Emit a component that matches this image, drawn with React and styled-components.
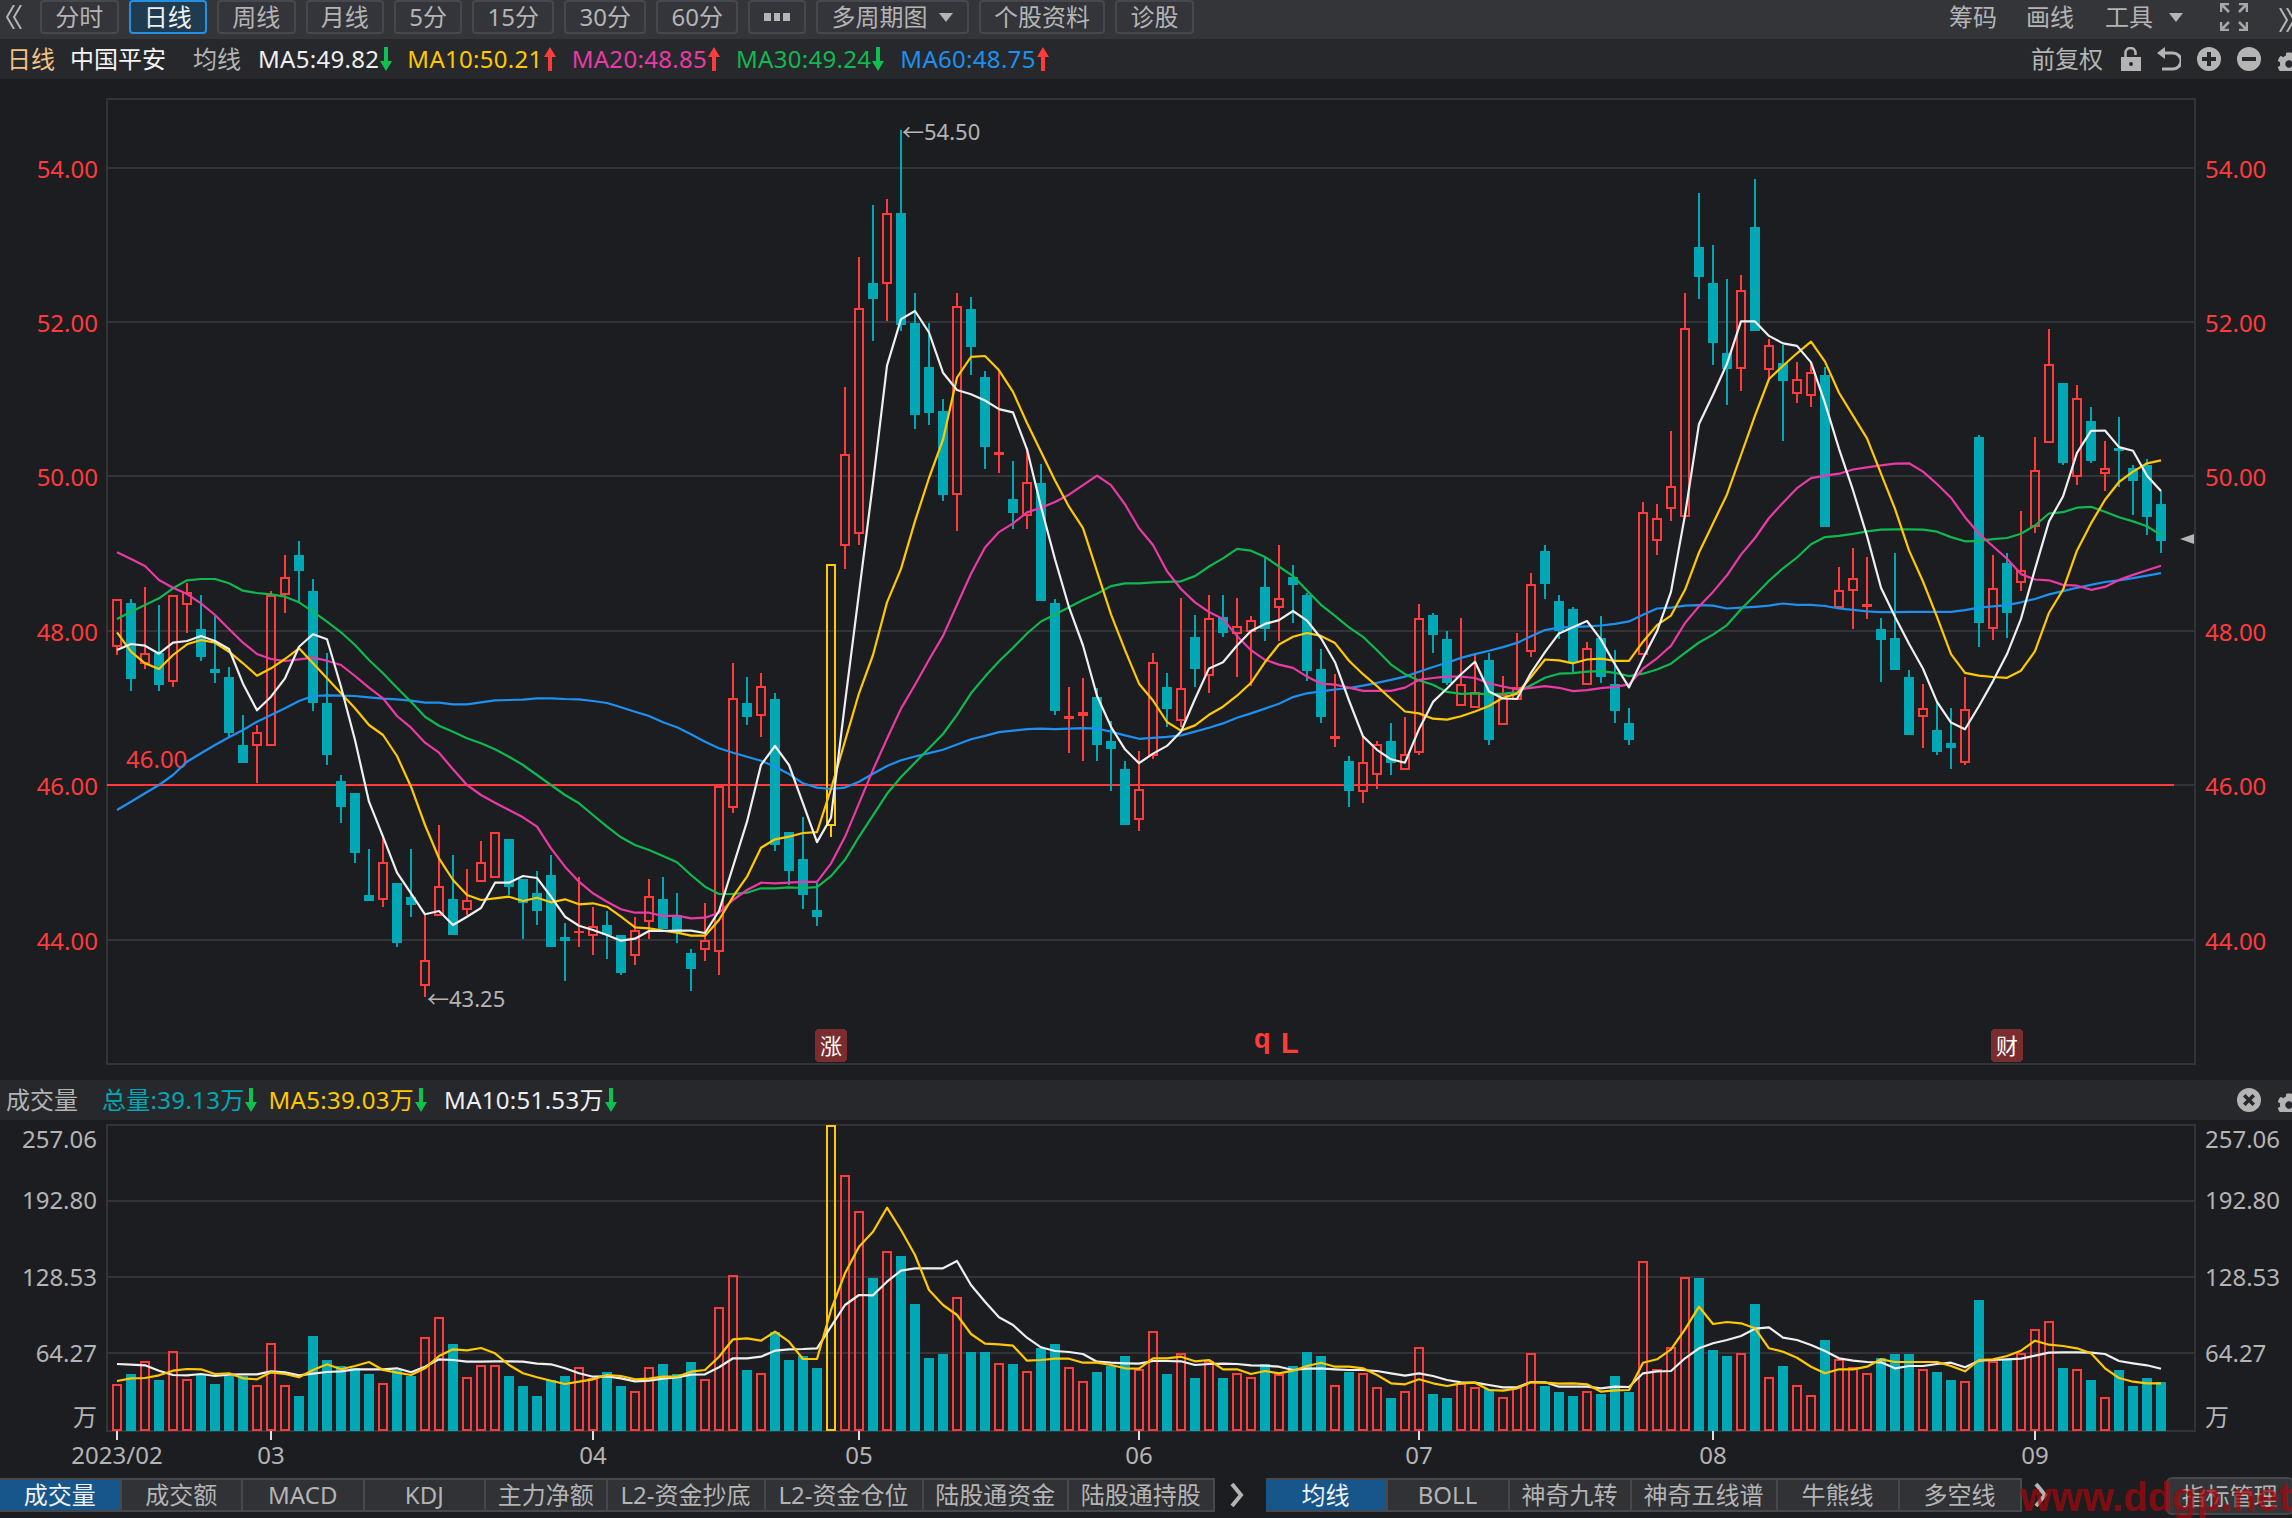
import React from 'react';
import styled, { createGlobalStyle } from 'styled-components';
import { FaCog } from 'react-icons/fa';

const GRAY = '#b4b4b4';
const RED = '#ff3b3b';
const TEAL = '#00a8b5';
const YELLOW = '#ffc800';
const PINK = '#e93aa5';
const GREEN = '#10b94f';
const BLUE = '#1e90f0';
const WHITE = '#efefef';
const GRID = '#323438';

// values were read from three crops of the chart, each with its own y scale
const fromCrop = (list, top, scale) => list.map((y) => top + y / scale);
const CROP_A = [500, 3];
const CROP_B = [100, 2.09];
const CROP_C = [150, 2.41];

const candleRows = (rows, [top, scale]) =>
  rows.map(([kind, ...ys]) => [kind, ...fromCrop(ys, top, scale).map(Math.round)]);

const CANDLES = [
  ...candleRows([
    ['r',298,298,440,465],['t',298,310,537,573],['r',262,460,493,507],['t',315,460,555,573],['r',284,286,547,560],
    ['r',250,275,314,398],['t',285,388,470,483],['t',345,507,518,548],['t',502,531,699,710],['t',645,735,789,789],
    ['r',675,695,739,850],['r',273,285,739,739],['r',165,232,284,340],['t',123,165,213,305],['t',237,273,608,633],
    ['t',460,609,765,795],['t',825,843,921,970],['t',879,879,1059,1089],['t',1047,1185,1203,1203],['r',1015,1085,1201,1221],
    ['t',1149,1149,1329,1341],['t',1047,1191,1215,1251],['r',1245,1379,1459,1491],['r',975,1157,1249,1249],['t',1065,1197,1305,1305],
    ['r',1107,1199,1231,1245],['r',1023,1085,1147,1147],['r',995,995,1135,1135],['t',1017,1017,1161,1185],['t',1137,1137,1209,1317],
    ['t',1113,1179,1233,1275],['t',1065,1125,1341,1341],['t',1269,1311,1323,1443],['r',1131,1293,1297,1341],['r',1221,1277,1309,1365],
    ['t',1233,1275,1305,1377],['t',1305,1305,1419,1425],['r',1251,1289,1369,1395],['r',1137,1187,1267,1317],['t',1131,1197,1287,1287],
    ['t',1179,1245,1299,1329],['t',1347,1359,1407,1473],['r',1209,1319,1351,1383],['r',859,859,1357,1425],['r',490,593,925,939],
    ['t',531,609,651,675],['r',519,557,649,711],['t',579,597,1035,1053],['t',995,995,1113,1155],
  ], CROP_A),
  ...candleRows([
    ['t',1498,1586,1662,1691],['t',1636,1692,1708,1727],['y',969,969,1518,1540],['r',600,739,933,980],['r',328,434,907,930],
    ['t',220,383,416,504],['r',207,237,385,462],['t',62,236,470,482],['t',403,466,659,688],['t',466,558,654,679],
    ['t',625,650,826,838],['r',403,430,825,901],['t',412,437,516,575],['t',567,579,725,771],['r',566,735,741,780],
    ['t',755,834,863,897],['r',728,798,870,897],['t',760,801,1047,1047],['t',1042,1052,1277,1285],['r',1227,1288,1294,1365],
    ['r',1207,1279,1288,1382],['t',1228,1248,1348,1382],['t',1298,1340,1357,1445],['t',1382,1399,1516,1516],['r',1361,1441,1505,1528],
    ['r',1156,1175,1372,1378],['t',1198,1227,1273,1310],['r',1040,1229,1297,1310],['t',1077,1123,1190,1227],['r',1035,1082,1204,1240],
    ['t',1035,1081,1115,1123],['r',1040,1100,1116,1205],['r',1078,1087,1111,1225],['t',958,1018,1105,1130],['r',930,1040,1062,1130],
    ['t',972,997,1013,1093],['t',1030,1035,1194,1215],['t',1148,1190,1290,1302],['r',1200,1329,1335,1353],['t',1370,1382,1445,1478],
    ['r',1330,1384,1447,1470],['r',1340,1345,1410,1440],['t',1302,1340,1385,1410],['r',1290,1367,1401,1401],['r',1053,1083,1364,1368],
    ['t',1072,1077,1119,1155],['t',1110,1127,1218,1222],['r',1082,1221,1267,1267],['r',1160,1238,1271,1271],
  ], CROP_B),
  ...candleRows([
    ['t',1213,1228,1421,1434],['r',1267,1310,1385,1385],['r',1165,1294,1325,1325],['r',1020,1047,1211,1222],['t',953,967,1045,1083],
    ['t',1073,1088,1160,1178],['t',1102,1107,1235,1257],['r',1185,1200,1290,1290],['t',1122,1175,1271,1285],['t',1205,1286,1353,1382],
    ['t',1344,1382,1421,1435],['r',848,873,1217,1217],['r',853,887,942,977],['r',678,810,865,895],['r',345,428,884,884],
    ['t',104,234,306,358],['t',229,321,466,519],['t',311,490,528,614],['r',302,337,527,581],['t',70,186,437,437],
    ['r',456,471,531,553],['t',470,514,557,702],['r',510,553,589,610],['r',510,534,594,620],['t',524,543,909,909],
    ['r',1006,1060,1104,1104],['r',958,1031,1062,1155],['r',982,1094,1101,1130],['t',1128,1155,1180,1281],['t',972,1175,1252,1252],
    ['t',1252,1271,1411,1411],['r',1286,1345,1367,1440],['t',1332,1397,1450,1458],['t',1344,1430,1440,1492],['r',1271,1346,1477,1483],
    ['t',688,692,1140,1198],['r',977,1056,1154,1180],['t',972,996,1117,1175],['r',871,1013,1044,1063],['r',692,771,908,923],
    ['r',432,516,705,705],['t',562,562,755,760],['r',567,598,787,808],['t',620,654,750,755],['r',702,767,782,823],
    ['t',644,717,725,812],['t',760,767,797,880],['t',745,760,885,929],['t',823,852,942,972],
  ], CROP_C),
];

const maLine = (a, b, c) => [...fromCrop(a, ...CROP_A), ...fromCrop(b, ...CROP_B), ...fromCrop(c, ...CROP_C)];

const MA_LINES = [
  {
    color: BLUE,
    ys: maLine(
      [930,905,880,855,825,785,760,735,712,690,665,645,625,603,588,586,587,588,592,596,598,602,608,608,613,613,607,601,600,599,595,595,597,598,603,609,622,635,648,667,682,703,725,745,758,770,782,800,822],
      [1428,1437,1440,1437,1425,1408,1392,1380,1372,1365,1358,1347,1336,1329,1321,1318,1315,1314,1315,1314,1313,1314,1320,1328,1335,1333,1331,1328,1320,1312,1303,1291,1282,1272,1262,1248,1240,1236,1232,1229,1224,1218,1212,1205,1195,1185,1176,1166,1158],
      [1207,1198,1188,1172,1157,1151,1150,1148,1146,1142,1136,1120,1105,1103,1098,1097,1098,1105,1103,1101,1098,1093,1096,1096,1099,1105,1108,1112,1114,1114,1113,1113,1113,1113,1109,1103,1100,1097,1090,1082,1071,1063,1055,1048,1041,1037,1032,1026,1020],
    ),
  },
  {
    color: GREEN,
    ys: maLine(
      [357,335,315,295,265,241,237,237,250,272,279,283,290,307,335,365,397,435,480,520,563,605,650,677,695,715,730,748,770,795,825,855,885,910,945,980,1012,1035,1050,1068,1087,1125,1160,1182,1182,1178,1165,1165,1162],
      [1647,1645,1622,1588,1540,1495,1450,1415,1385,1355,1325,1285,1240,1205,1173,1145,1115,1090,1075,1060,1045,1032,1016,1010,1010,1008,1007,1006,995,975,958,938,942,955,975,995,1025,1055,1078,1102,1122,1150,1180,1200,1213,1222,1237,1241,1240],
      [1312,1310,1307,1290,1272,1262,1261,1257,1256,1260,1268,1262,1252,1238,1212,1187,1168,1145,1107,1073,1038,1008,982,950,933,930,925,919,915,914,914,915,920,933,943,942,938,935,925,905,876,873,862,860,872,885,895,907,928],
    ),
  },
  {
    color: PINK,
    ys: maLine(
      [157,177,198,240,263,282,310,345,387,428,462,477,483,478,473,482,495,528,563,595,648,683,728,758,808,855,885,908,930,952,980,1045,1100,1145,1180,1205,1228,1238,1238,1248,1247,1255,1253,1238,1200,1170,1148,1150,1148],
      [1634,1634,1596,1540,1470,1400,1335,1272,1222,1170,1120,1055,990,935,903,885,862,852,840,825,805,785,805,845,895,930,985,1022,1050,1070,1085,1120,1150,1170,1180,1187,1205,1220,1222,1228,1235,1235,1235,1228,1212,1208,1205,1205,1208],
      [1285,1293,1300,1296,1292,1296,1304,1302,1297,1294,1288,1250,1225,1195,1140,1100,1065,1025,975,935,887,850,815,791,785,780,770,765,760,756,755,775,805,838,885,925,955,985,1022,1035,1037,1048,1050,1060,1053,1036,1024,1013,1002],
    ),
  },
  {
    color: YELLOW,
    ys: maLine(
      [397,455,490,507,465,433,420,428,455,490,527,505,477,445,490,535,580,625,675,705,768,860,975,1075,1140,1185,1200,1195,1190,1203,1193,1207,1198,1213,1210,1220,1250,1282,1285,1292,1298,1307,1307,1260,1190,1130,1043,1018,1010],
      [1532,1530,1440,1340,1240,1160,1050,980,880,790,710,580,537,535,565,610,675,735,795,850,895,985,1075,1150,1220,1255,1300,1318,1307,1285,1268,1245,1218,1175,1138,1122,1114,1120,1135,1172,1200,1225,1252,1278,1282,1293,1295,1288,1278],
      [1340,1320,1310,1270,1228,1230,1237,1228,1226,1231,1231,1185,1145,1122,1060,970,900,830,735,640,552,520,490,462,510,585,640,695,780,865,965,1040,1125,1215,1260,1267,1270,1272,1255,1208,1115,1060,965,900,843,800,775,755,748],
    ),
  },
  {
    color: WHITE,
    ys: maLine(
      [450,432,437,461,428,423,408,423,447,551,631,590,535,440,403,418,560,720,905,1010,1118,1180,1243,1233,1275,1250,1224,1148,1148,1128,1134,1190,1250,1277,1290,1305,1322,1316,1293,1293,1292,1292,1299,1233,1100,965,795,738,795],
      [1470,1551,1500,1260,1030,800,555,458,441,486,570,606,615,628,646,653,730,850,960,1060,1140,1245,1310,1357,1386,1366,1350,1320,1252,1188,1175,1140,1110,1095,1087,1068,1088,1125,1175,1255,1330,1358,1378,1385,1315,1258,1230,1200,1174],
      [1305,1322,1323,1260,1210,1165,1150,1135,1180,1240,1295,1225,1160,1065,880,660,590,515,413,413,448,466,472,512,610,720,820,930,1055,1125,1190,1250,1330,1380,1396,1340,1280,1215,1130,1010,895,835,730,677,676,716,725,785,822],
    ),
  },
];

const volY = (list) => fromCrop(list, 1040, 3);

const VOLUME_TOPS = volY([
  1033,1002,962,1020,932,1016,1006,1032,1008,1008,1034,908,1034,1068,888,960,978,984,1002,1028,990,1008,890,830,912,1010,974,974,1008,1038,1068,1020,1008,980,1015,996,1038,1052,980,972,1002,966,1016,800,704,990,998,876,960,
  948,984,254,404,512,714,632,648,792,954,942,770,936,936,968,972,992,924,912,980,1022,996,978,948,986,872,1002,938,1014,962,1014,998,1010,972,1002,978,936,948,1034,996,998,1040,1074,1052,920,1062,1074,1030,1040,1048,1070,1040,938,1038,1056,1068,1052,1062,
  1008,1056,662,986,920,710,714,930,948,938,792,1010,978,1034,1064,900,956,980,998,954,942,942,986,996,1020,1022,780,962,960,938,866,842,984,986,1020,1070,990,1038,1014,1026,
]).map(Math.round);

const VOLUME_LINES = [
  {
    color: WHITE,
    ys: volY([
      972,974,976,992,1005,1006,1002,1008,1004,1003,1003,994,997,1006,1001,996,994,988,988,988,985,997,980,958,960,965,965,964,964,965,971,973,985,1000,1010,1009,1015,1024,1022,1016,1012,1004,1003,982,955,955,950,932,928,
      927,925,860,795,765,766,725,692,685,685,685,663,735,785,832,855,893,922,933,936,942,965,968,970,971,963,963,964,975,972,971,972,976,977,980,990,986,985,988,990,990,993,1000,1007,1000,1008,1020,1027,1028,1035,1042,1042,1026,1027,1040,1040,1040,1045,
      1040,1041,1000,994,993,955,925,910,900,888,866,862,893,900,915,933,955,962,966,967,985,978,978,972,968,982,962,960,958,956,947,938,937,937,938,942,963,970,976,986,
    ]),
  },
  {
    color: YELLOW,
    ys: volY([
      1023,1015,1014,1006,992,987,988,1002,1000,1015,1018,997,1002,1012,990,973,988,978,966,990,998,1005,985,948,928,931,924,940,975,1000,1012,1022,1032,1025,1018,1005,1008,1018,1016,1010,1010,995,990,950,898,895,902,875,905,
      957,957,810,700,620,575,503,570,645,750,795,825,882,911,913,917,962,960,956,956,968,968,975,985,986,955,955,950,964,960,988,988,1002,993,1000,992,978,968,980,980,985,1005,1030,1033,1018,1030,1038,1030,1028,1050,1052,1045,1027,1028,1031,1030,1033,1055,
      1051,1050,968,958,928,868,800,852,846,850,865,925,935,953,980,1000,988,988,980,958,966,966,966,966,978,994,960,958,948,932,902,914,918,925,940,985,1014,1025,1030,1030,
    ]),
  },
];

const candleX = (i) => 117 + 14 * i;
const points = (ys) => ys.map((y, i) => `${candleX(i)},${y.toFixed(1)}`).join(' ');
const kindColor = { r: RED, t: TEAL, y: YELLOW };

const priceLabels = [
  ['54.00', 168],
  ['52.00', 322],
  ['50.00', 476],
  ['48.00', 631],
  ['46.00', 785],
  ['44.00', 940],
];
const volumeLabels = [
  ['257.06', 1138],
  ['192.80', 1199],
  ['128.53', 1276],
  ['64.27', 1352],
  ['万', 1416],
];
const monthLabels = [
  ['2023/02', 117],
  ['03', 271],
  ['04', 593],
  ['05', 859],
  ['06', 1139],
  ['07', 1419],
  ['08', 1713],
  ['09', 2035],
];

const periodTabs = [
  { label: '分时' },
  { label: '日线', active: true },
  { label: '周线' },
  { label: '月线' },
  { label: '5分' },
  { label: '15分' },
  { label: '30分' },
  { label: '60分' },
];
const indicatorTabs = [
  { label: '成交量', width: 121.5, active: true },
  { label: '成交额', width: 121.5 },
  { label: 'MACD', width: 121.5 },
  { label: 'KDJ', width: 121.5 },
  { label: '主力净额', width: 121.5 },
  { label: 'L2-资金抄底', width: 158 },
  { label: 'L2-资金仓位', width: 158 },
  { label: '陆股通资金', width: 145.5 },
  { label: '陆股通持股', width: 145.5 },
];
const overlayTabs = [
  { label: '均线', width: 122, active: true },
  { label: 'BOLL', width: 122 },
  { label: '神奇九转', width: 122 },
  { label: '神奇五线谱', width: 146 },
  { label: '牛熊线', width: 122 },
  { label: '多空线', width: 122 },
];
const maReadouts = [
  { text: 'MA5:49.82', color: WHITE, up: false },
  { text: 'MA10:50.21', color: YELLOW, up: true },
  { text: 'MA20:48.85', color: PINK, up: true },
  { text: 'MA30:49.24', color: GREEN, up: false },
  { text: 'MA60:48.75', color: BLUE, up: true },
];
const volReadouts = [
  { text: '总量:39.13万', color: TEAL, gap: 11 },
  { text: 'MA5:39.03万', color: YELLOW, gap: 17 },
  { text: 'MA10:51.53万', color: WHITE, gap: 17 },
];

const GlobalStyle = createGlobalStyle`
  html, body {
    margin: 0;
    background: #1c1d21;
  }
  body {
    font-family: 'Noto Sans', 'Noto Sans CJK SC', sans-serif;
    font-size: 24px;
    color: ${GRAY};
  }
`;

const Page = styled.div`
  position: relative;
  width: 2292px;
  height: 1518px;
  overflow: hidden;
  display: flex;
  flex-direction: column;
  background: #1c1d21;
`;

const Toolbar = styled.header`
  flex: none;
  height: 39px;
  display: flex;
  align-items: flex-start;
  background: #333539;
`;

const DoubleChevron = styled.svg`
  flex: none;
  display: block;
  width: ${(p) => p.$w}px;
  height: 24px;
  margin: 5px ${(p) => p.$right || 0}px 0 ${(p) => p.$left || 0}px;
`;

const PeriodGroup = styled.nav`
  display: flex;
  gap: 10px;
`;

const PeriodButton = styled.button`
  height: 34px;
  padding: 0 13.25px;
  display: flex;
  align-items: center;
  gap: 12px;
  font: inherit;
  line-height: 30px;
  color: ${(p) => (p.$active ? '#f0f0f0' : GRAY)};
  background: ${(p) => (p.$active ? '#1e3b50' : '#33353a')};
  border: 2px solid ${(p) => (p.$active ? '#2590e2' : '#46484d')};
  border-radius: 4px;
`;

const MoreButton = styled(PeriodButton)`
  width: 58px;
  justify-content: center;
  padding: 0;
`;

const Caret = styled.i`
  flex: none;
  width: 0;
  height: 0;
  border-left: 7px solid transparent;
  border-right: 7px solid transparent;
  border-top: 9px solid ${GRAY};
`;

const ToolGroup = styled.div`
  margin-left: auto;
  height: 34px;
  display: flex;
  align-items: center;
  line-height: 30px;
`;

const ToolLabel = styled.span`
  margin-right: ${(p) => p.$gap}px;
`;

const ExpandIcon = styled.svg`
  flex: none;
  width: 28px;
  height: 28px;
  margin: 0 31px 0 37px;
`;

const InfoBar = styled.div`
  flex: none;
  height: 40px;
  display: flex;
  align-items: center;
  padding-left: ${(p) => p.$pad}px;
  line-height: 40px;
  background: #26282c;
`;

const BarText = styled.span`
  flex: none;
  white-space: nowrap;
  color: ${(p) => p.$color || GRAY};
  margin-right: ${(p) => p.$gap || 0}px;
`;

const Readout = styled.span`
  flex: none;
  display: flex;
  align-items: center;
  gap: 1px;
  margin-right: ${(p) => p.$gap}px;
  letter-spacing: 0.3px;
  white-space: nowrap;
  color: ${(p) => p.$color};
`;

const BarIcons = styled.div`
  margin-left: auto;
  display: flex;
  align-items: center;
  gap: 16px;
`;

const IconBox = styled.svg`
  flex: none;
  width: ${(p) => p.$w || 24}px;
  height: 24px;
  color: ${GRAY};
`;

const GearClip = styled.span`
  flex: none;
  width: 15px;
  height: 24px;
  overflow: hidden;
  color: ${GRAY};
  display: block;
`;

const ChartSvg = styled.svg`
  flex: none;
  display: block;
  width: 2292px;
  height: ${(p) => p.$h}px;
`;

const ChartText = styled.text`
  font-size: ${(p) => p.$size || 24}px;
  fill: ${(p) => p.$color || GRAY};
  text-anchor: ${(p) => p.$anchor || 'start'};
  dominant-baseline: central;
`;

const MarkerText = styled.text`
  font-size: 22px;
  fill: #fff;
  text-anchor: middle;
  dominant-baseline: central;
`;

const SignalText = styled.text`
  font-family: 'Liberation Sans', sans-serif;
  font-size: ${(p) => p.$size}px;
  font-weight: 700;
  fill: ${RED};
`;

const GridLine = styled.line`
  stroke: ${GRID};
  stroke-width: 2;
`;

const MaLine = styled.polyline`
  fill: none;
  stroke: ${(p) => p.$color};
  stroke-width: 2.2;
  stroke-linejoin: round;
`;

const TabBar = styled.footer`
  flex: none;
  height: 34px;
  display: flex;
`;

const TabGroup = styled.div`
  flex: none;
  display: flex;
  border-top: 2px solid #46484d;
  border-bottom: 2px solid #46484d;
`;

const Tab = styled.div`
  box-sizing: border-box;
  width: ${(p) => p.$width}px;
  text-align: center;
  line-height: 30px;
  white-space: nowrap;
  color: ${(p) => (p.$active ? '#f0f0f0' : GRAY)};
  background: ${(p) => (p.$active ? '#17568a' : '#303236')};
  border-right: 2px solid #46484d;
`;

const TabChevron = styled.svg`
  flex: none;
  width: 14px;
  height: 24px;
  align-self: center;
  margin: 0 ${(p) => p.$right}px 0 ${(p) => p.$left}px;
`;

const ManageButton = styled.div`
  flex: none;
  box-sizing: border-box;
  height: 38px;
  margin-top: -1px;
  padding: 0 14px;
  line-height: 34px;
  white-space: nowrap;
  background: #333538;
  border: 2px solid #46484d;
  border-radius: 6px;
`;

const Watermark = styled.div`
  position: absolute;
  right: 0;
  bottom: -2px;
  font-family: 'Liberation Sans', sans-serif;
  font-size: 40px;
  font-weight: 700;
  line-height: 46px;
  color: rgba(165, 8, 12, 0.74);
  pointer-events: none;
`;

const Arrow = ({ up }) => (
  <IconBox $w={12} viewBox="0 0 12 24">
    {up ? (
      <path d="M6 0 12 10H8V24H4V10H0Z" fill={RED} />
    ) : (
      <path d="M4 0H8V14H12L6 24 0 14H4Z" fill="#10c04f" />
    )}
  </IconBox>
);

const Candle = ({ data, index }) => {
  const [kind, hi, top, bot, lo] = data;
  const x = candleX(index);
  const color = kindColor[kind];
  const height = Math.max(bot - top, 2);

  if (kind === 't') {
    return (
      <g fill={color}>
        <rect x={x - 1} y={hi} width={2} height={lo - hi} />
        <rect x={x - 5} y={top} width={10} height={height} />
      </g>
    );
  }

  return (
    <g fill={color}>
      <rect x={x - 1} y={hi} width={2} height={Math.max(top - hi, 0)} />
      <rect x={x - 1} y={bot} width={2} height={Math.max(lo - bot, 0)} />
      {height < 6 ? (
        <rect x={x - 5} y={top} width={10} height={height} />
      ) : (
        <rect x={x - 4} y={top + 1} width={8} height={height - 2} fill="none" stroke={color} strokeWidth={2} />
      )}
    </g>
  );
};

const VolumeBar = ({ top, kind, index }) => {
  const x = candleX(index);
  const bottom = 1431;
  const color = kindColor[kind];
  if (kind === 't') return <rect x={x - 5} y={top} width={10} height={bottom - top} fill={color} />;
  return <rect x={x - 4} y={top + 1} width={8} height={bottom - top - 2} fill="none" stroke={color} strokeWidth={2} />;
};

const Marker = ({ x, label }) => (
  <g>
    <rect x={x - 16} y={1029} width={32} height={33} rx={4} fill="#7a2c2e" />
    <MarkerText x={x} y={1045}>{label}</MarkerText>
  </g>
);

const MainChart = () => (
  <ChartSvg $h={1001} viewBox="0 79 2292 1001" shapeRendering="crispEdges">
    <rect x={107} y={99} width={2088} height={965} fill="none" stroke={GRID} strokeWidth={2} />
    {priceLabels.map(([label, y]) => (
      <g key={label}>
        <GridLine x1={107} x2={2195} y1={y} y2={y} />
        <ChartText x={98} y={y} $color={RED} $anchor="end">{label}</ChartText>
        <ChartText x={2205} y={y} $color={RED}>{label}</ChartText>
      </g>
    ))}
    <rect x={107} y={784} width={2067} height={2} fill={RED} />
    <ChartText x={126} y={758} $color={RED}>46.00</ChartText>

    {CANDLES.map((c, i) => (
      <Candle key={i} data={c} index={i} />
    ))}
    <g shapeRendering="auto">
      {MA_LINES.map((l) => (
        <MaLine key={l.color} points={points(l.ys)} $color={l.color} />
      ))}
    </g>

    <ChartText x={902} y={131} $size={22}>←54.50</ChartText>
    <ChartText x={427} y={998} $size={22}>←43.25</ChartText>
    <path d="M2180 539 2194 534V544Z" fill={GRAY} shapeRendering="auto" />

    <Marker x={831} label="涨" />
    <Marker x={2007} label="财" />
    <SignalText x={1254} y={1048} $size={27}>q</SignalText>
    <SignalText x={1281} y={1053} $size={29}>L</SignalText>
  </ChartSvg>
);

const VolumeChart = () => (
  <ChartSvg $h={358} viewBox="0 1120 2292 358" shapeRendering="crispEdges">
    <rect x={107} y={1125} width={2088} height={306} fill="none" stroke={GRID} strokeWidth={2} />
    {[1201, 1277, 1353].map((y) => (
      <GridLine key={y} x1={107} x2={2195} y1={y} y2={y} />
    ))}
    {volumeLabels.map(([label, y]) => (
      <g key={label}>
        <ChartText x={97} y={y} $anchor="end">{label}</ChartText>
        <ChartText x={2205} y={y}>{label}</ChartText>
      </g>
    ))}
    {VOLUME_TOPS.map((top, i) => (
      <VolumeBar key={i} top={top} kind={CANDLES[i][0]} index={i} />
    ))}
    <g shapeRendering="auto">
      {VOLUME_LINES.map((l) => (
        <MaLine key={l.color} points={points(l.ys)} $color={l.color} />
      ))}
    </g>
    {monthLabels.map(([label, x]) => (
      <g key={label}>
        <rect x={x - 1} y={1431} width={2} height={9} fill="#e0e0e0" />
        <ChartText x={x} y={1454} $anchor="middle">{label}</ChartText>
      </g>
    ))}
  </ChartSvg>
);

const Chevron = ({ left, right }) => (
  <TabChevron $left={left} $right={right} viewBox="0 0 14 24">
    <path d="M2 1 11 12 2 23" fill="none" stroke={GRAY} strokeWidth={4} />
  </TabChevron>
);

const App = () => (
  <Page>
    <GlobalStyle />
    <Toolbar>
      <DoubleChevron $w={16} $left={6} $right={18} viewBox="0 0 16 24">
        <path d="M8 0 1 12 8 24M15 0 8 12 15 24" fill="none" stroke={GRAY} strokeWidth={2} />
      </DoubleChevron>
      <PeriodGroup>
        {periodTabs.map((t) => (
          <PeriodButton key={t.label} $active={t.active}>{t.label}</PeriodButton>
        ))}
        <MoreButton>
          <svg width="26" height="8" viewBox="0 0 26 8">
            <path d="M0 0h7v8H0zM10 0h6v8h-6zM19 0h7v8h-7z" fill={GRAY} />
          </svg>
        </MoreButton>
        <PeriodButton>多周期图<Caret /></PeriodButton>
        <PeriodButton>个股资料</PeriodButton>
        <PeriodButton>诊股</PeriodButton>
      </PeriodGroup>
      <ToolGroup>
        <ToolLabel $gap={29}>筹码</ToolLabel>
        <ToolLabel $gap={31}>画线</ToolLabel>
        <ToolLabel $gap={16}>工具</ToolLabel>
        <Caret />
        <ExpandIcon viewBox="0 0 28 28">
          <path
            d="M1 9V1H9M1 1 9 9M19 1H27V9M27 1 19 9M1 19V27H9M1 27 9 19M27 19V27H19M27 27 19 19"
            fill="none"
            stroke="#a8a8a8"
            strokeWidth={2.5}
          />
        </ExpandIcon>
        <DoubleChevron $w={13} viewBox="0 0 13 24">
          <path d="M1 0 8 12 1 24M8 0 15 12 8 24" fill="none" stroke={GRAY} strokeWidth={2} />
        </DoubleChevron>
      </ToolGroup>
    </Toolbar>

    <InfoBar $pad={7}>
      <BarText $color="#f5c084" $gap={15}>日线</BarText>
      <BarText $color="#f4f4f4" $gap={27}>中国平安</BarText>
      <BarText $gap={17}>均线</BarText>
      {maReadouts.map((m, i) => (
        <Readout key={m.text} $color={m.color} $gap={i === 0 ? 15 : 16}>
          {m.text}
          <Arrow up={m.up} />
        </Readout>
      ))}
      <BarIcons>
        <BarText $color={GRAY} $gap={2}>前复权</BarText>
        <IconBox $w={20} viewBox="0 0 20 24">
          <path d="M4.5 11V6a5 5 0 0 1 10 0v2" fill="none" stroke="currentColor" strokeWidth={2.5} />
          <path d="M0 10h20v14H0zM10 15a2 2 0 1 0 0 4 2 2 0 0 0 0-4z" fill="currentColor" fillRule="evenodd" />
        </IconBox>
        <IconBox viewBox="0 0 24 24">
          <path d="M7 6H16a6.5 6.5 0 0 1 0 16H5" fill="none" stroke="currentColor" strokeWidth={3} />
          <path d="M0 6 8 0V12Z" fill="currentColor" />
        </IconBox>
        <IconBox viewBox="0 0 24 24">
          <path d="M12 0a12 12 0 1 0 0 24 12 12 0 0 0 0-24zM10 5h4v5h5v4h-5v5h-4v-5H5v-4h5z" fill="currentColor" fillRule="evenodd" />
        </IconBox>
        <IconBox viewBox="0 0 24 24">
          <path d="M12 0a12 12 0 1 0 0 24 12 12 0 0 0 0-24zM5 10h14v4H5z" fill="currentColor" fillRule="evenodd" />
        </IconBox>
        <GearClip><FaCog size={24} /></GearClip>
      </BarIcons>
    </InfoBar>

    <MainChart />

    <InfoBar $pad={6}>
      <BarText $gap={24}>成交量</BarText>
      {volReadouts.map((m) => (
        <Readout key={m.text} $color={m.color} $gap={m.gap}>
          {m.text}
          <Arrow up={false} />
        </Readout>
      ))}
      <BarIcons>
        <IconBox viewBox="0 0 24 24">
          <path
            d="M12 0a12 12 0 1 0 0 24 12 12 0 0 0 0-24zM8.5 6 12 9.5 15.5 6 18 8.500 14.500 12 18 15.500 15.500 18 12 14.500 8.500 18 6 15.500 9.500 12 6 8.500z"
            fill="currentColor"
            fillRule="evenodd"
          />
        </IconBox>
        <GearClip><FaCog size={24} /></GearClip>
      </BarIcons>
    </InfoBar>

    <VolumeChart />

    <TabBar>
      <TabGroup>
        {indicatorTabs.map((t) => (
          <Tab key={t.label} $width={t.width} $active={t.active}>{t.label}</Tab>
        ))}
      </TabGroup>
      <Chevron left={15} right={22} />
      <TabGroup>
        {overlayTabs.map((t) => (
          <Tab key={t.label} $width={t.width} $active={t.active}>{t.label}</Tab>
        ))}
      </TabGroup>
      <Chevron left={12} right={118} />
      <ManageButton>指标管理</ManageButton>
    </TabBar>

    <Watermark>www.ddgp.net</Watermark>
  </Page>
);

export default App;
